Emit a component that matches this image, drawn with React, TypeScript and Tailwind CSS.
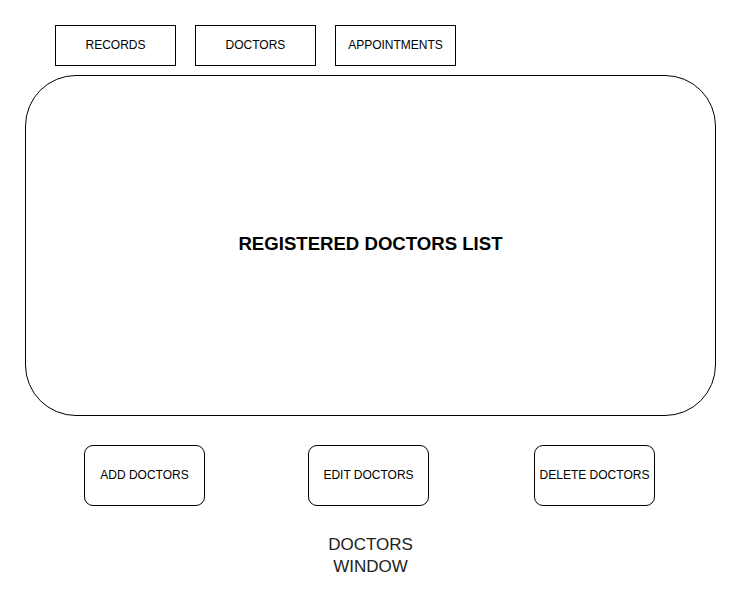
const tabs = ['RECORDS', 'DOCTORS', 'APPOINTMENTS'];
const actions = [
  { label: 'ADD DOCTORS', gap: '' },
  { label: 'EDIT DOCTORS', gap: 'ml-[103px]' },
  { label: 'DELETE DOCTORS', gap: 'ml-[105px]' },
];

const App = () => {
  return (
    <div className="w-[741px] h-[602px] bg-white text-black font-['Liberation_Sans',Arial,sans-serif] overflow-hidden">
      {/* top tabs */}
      <div className="flex gap-[19px] pl-[55px] pt-[25px]">
        {tabs.map((t) => (
          <div
            key={t}
            className="w-[121px] h-[41px] pb-[2px] border border-black flex items-center justify-center text-[12px]"
          >
            {t}
          </div>
        ))}
      </div>

      {/* list area */}
      <div className="ml-[25px] mt-[9px] w-[691px] h-[341px] pb-[4px] border border-black rounded-[51px] flex items-center justify-center">
        <span className="text-[18.6px] font-bold">REGISTERED DOCTORS LIST</span>
      </div>

      {/* actions */}
      <div className="pl-[84px] mt-[29px] flex">
        {actions.map((a) => (
          <div
            key={a.label}
            className={`${a.gap} w-[121px] h-[61px] pb-[2px] border border-black rounded-[9px] flex items-center justify-center text-[12px]`}
          >
            {a.label}
          </div>
        ))}
      </div>

      <div className="mt-[28px] flex flex-col items-center text-[17px] leading-[22px] text-[#222]">
        <span>DOCTORS</span>
        <span>WINDOW</span>
      </div>
    </div>
  );
};

export default App;
